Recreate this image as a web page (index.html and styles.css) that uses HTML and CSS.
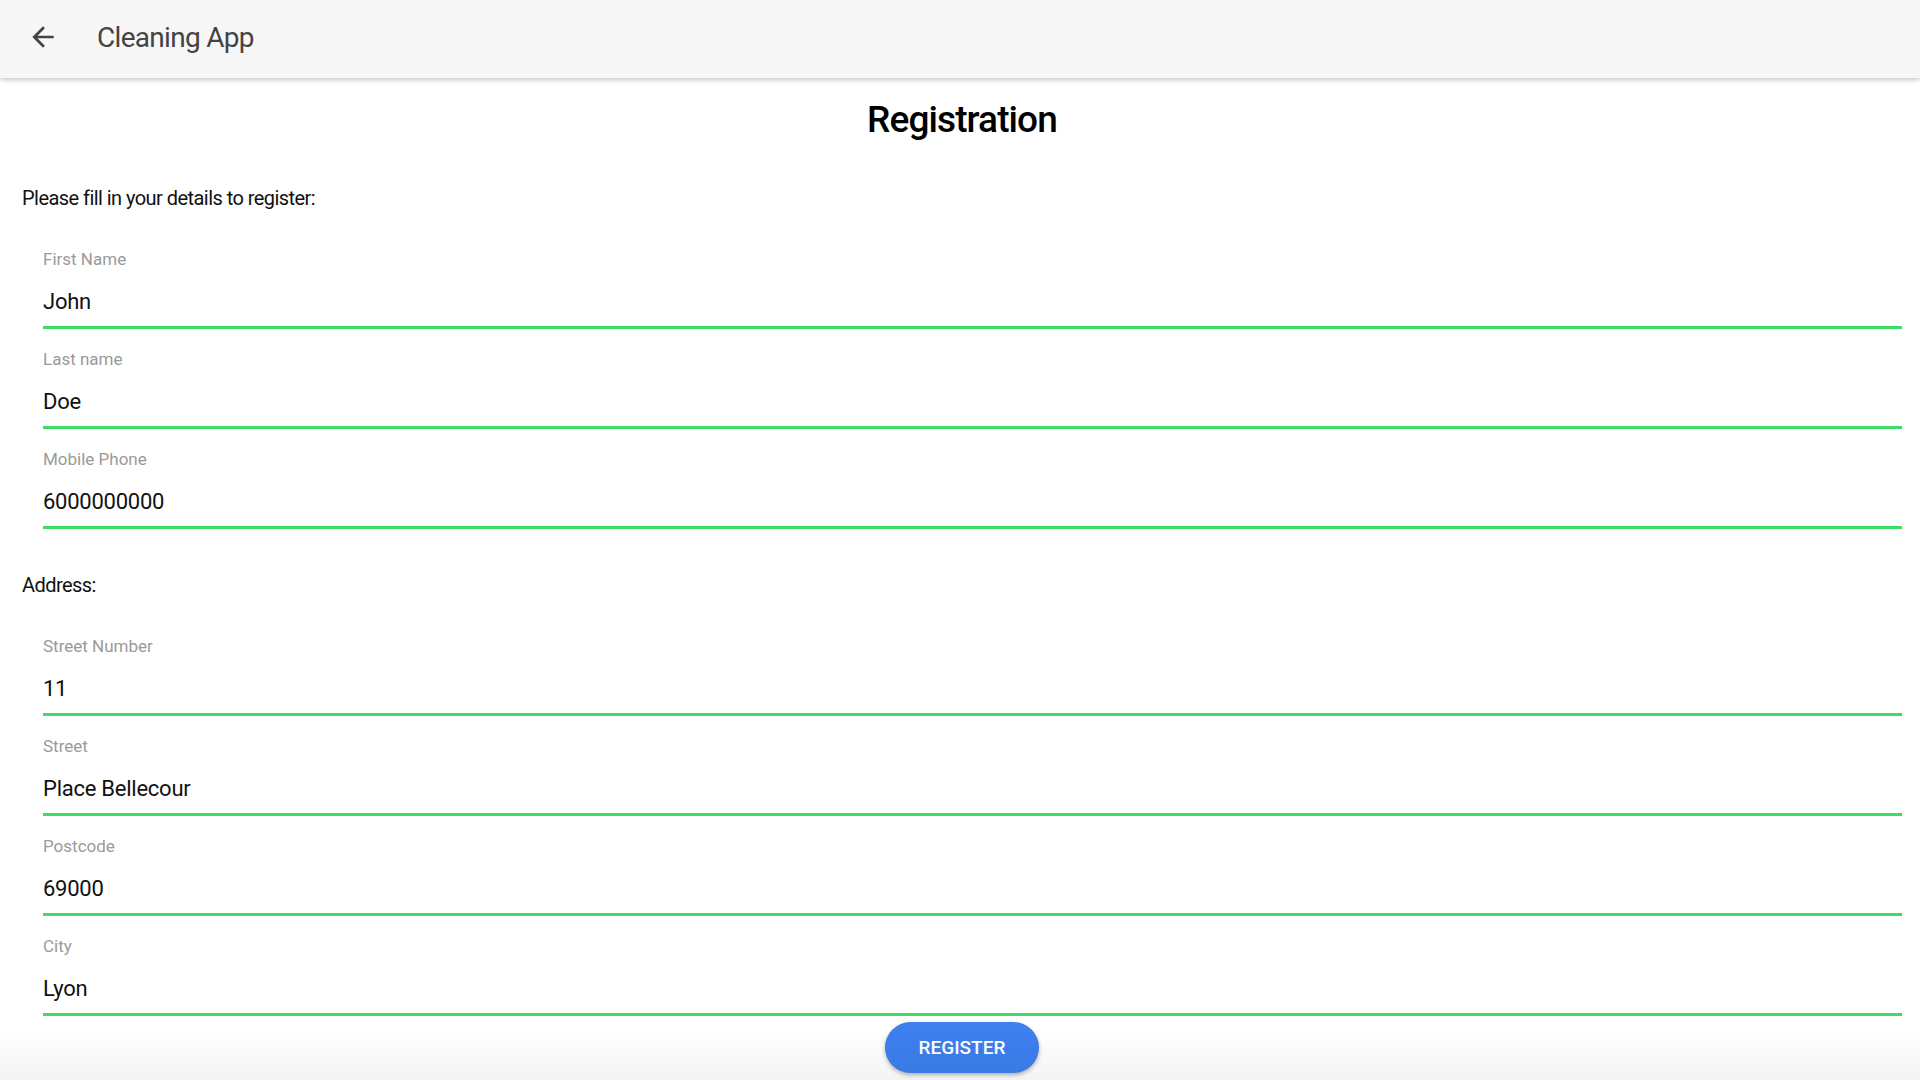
FILE: index.html
```html
<!DOCTYPE html>
<html lang="en">
<head>
<meta charset="utf-8">
<title>Cleaning App</title>
<link rel="stylesheet" href="styles.css">
</head>
<body>
<header class="app-bar">
  <button class="back-btn" aria-label="Back">
    <svg class="back-icon" viewBox="0 0 24 24" width="32" height="32"><path d="M20 11H7.83l5.59-5.59L12 4l-8 8 8 8 1.41-1.41L7.83 13H20v-2z" fill="#444"/></svg>
  </button>
  <h1 class="app-title">Cleaning App</h1>
</header>
<main class="page">
  <h2 class="page-title">Registration</h2>
  <p class="section-text">Please fill in your details to register:</p>
  <div class="field"><span class="field-label">First Name</span><span class="field-value">John</span></div>
  <div class="field"><span class="field-label">Last name</span><span class="field-value">Doe</span></div>
  <div class="field"><span class="field-label">Mobile Phone</span><span class="field-value">6000000000</span></div>
  <p class="section-text section-address">Address:</p>
  <div class="field"><span class="field-label">Street Number</span><span class="field-value">11</span></div>
  <div class="field"><span class="field-label">Street</span><span class="field-value">Place Bellecour</span></div>
  <div class="field"><span class="field-label">Postcode</span><span class="field-value">69000</span></div>
  <div class="field"><span class="field-label">City</span><span class="field-value">Lyon</span></div>
  <div class="actions"><button class="register-btn">REGISTER</button></div>
</main>
<div class="bottom-fade"></div>
</body>
</html>
```
FILE: styles.css
```css
html, body {
  margin: 0;
  padding: 0;
  background: #ffffff;
  font-family: Roboto, "Liberation Sans", sans-serif;
  color: #111;
  height: 1080px;
  overflow: hidden;
}
.app-bar {
  height: 78px;
  background: #f7f7f7;
  box-shadow: 0 2px 5px rgba(0,0,0,0.22);
  display: flex;
  align-items: center;
  position: relative;
  z-index: 2;
}
.back-btn {
  border: 0;
  background: transparent;
  padding: 0;
  margin: -5px 0 0 27px;
  width: 32px;
  height: 32px;
  display: flex;
}
.app-title {
  margin: -4px 0 0 38px;
  font-size: 28px;
  font-weight: 400;
  color: #444;
  letter-spacing: -0.7px;
}
.page {
  padding: 0 18px 0 22px;
}
.page-title {
  margin: 19px 0 0;
  text-align: center;
  font-size: 37px;
  line-height: 46px;
  font-weight: 500;
  color: #000;
  letter-spacing: -0.9px;
}
.section-text {
  margin: 43px 0 0;
  font-size: 20px;
  line-height: 24px;
  color: #111;
  letter-spacing: -0.55px;
}
.section-address {
  margin-top: 44px;
}
.field {
  margin: 0 0 0 21px;
  height: 100px;
  box-sizing: border-box;
  border-bottom: 3px solid #3ddc68;
  display: flex;
  flex-direction: column;
  padding-top: 20px;
}
.section-text + .field {
  margin-top: 19px;
}
.field-label {
  font-size: 17px;
  line-height: 20px;
  color: #9a9a9a;
}
.field-value {
  margin-top: 20px;
  font-size: 22px;
  line-height: 26px;
  color: #111;
  letter-spacing: -0.25px;
}
.actions {
  display: flex;
  justify-content: center;
  margin-top: 6px;
}
.register-btn {
  width: 154px;
  height: 51px;
  border: 0;
  border-radius: 26px;
  background: #3d7fee;
  color: #fff;
  font-family: Roboto, "Liberation Sans", sans-serif;
  font-size: 19px;
  font-weight: 500;
  box-shadow: 0 2px 4px rgba(0,0,0,0.3);
}
.bottom-fade {
  position: fixed;
  left: 0;
  right: 0;
  bottom: 0;
  height: 50px;
  background: linear-gradient(to bottom, rgba(0,0,0,0), rgba(0,0,0,0.045));
  pointer-events: none;
}
```
